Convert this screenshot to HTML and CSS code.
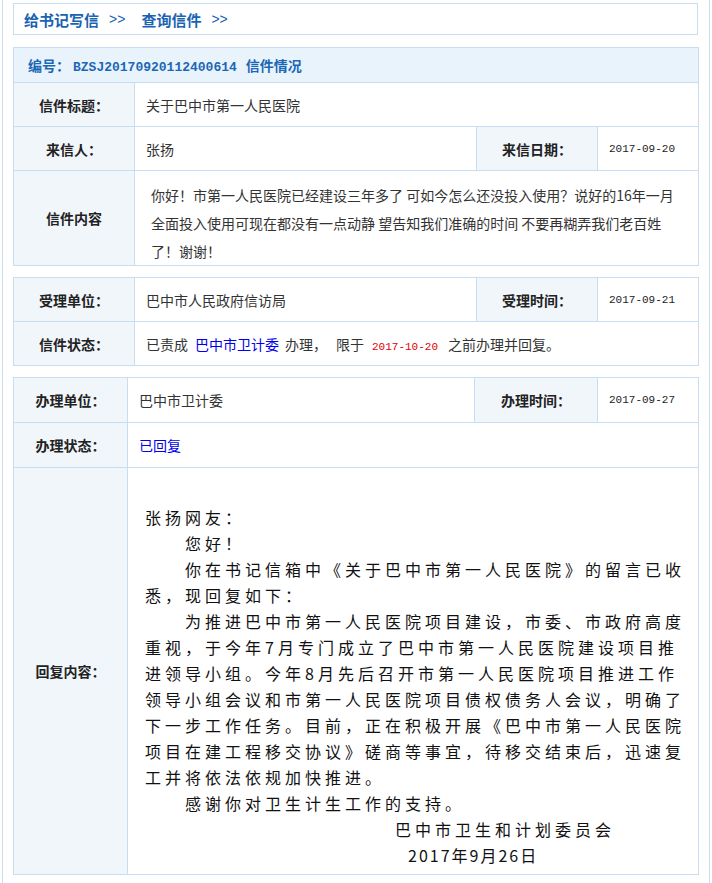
FILE: index.html
```html
<!DOCTYPE html>
<html lang="zh-CN">
<head>
  <meta charset="UTF-8" />
  <title>信件详情</title>
  <link rel="stylesheet" href="styles.css">
</head>
<body>
  <div class="page">
    <div class="nav">
      <a href="#">给书记写信</a><span class="arrow">&gt;&gt;</span>
      <a href="#">查询信件</a><span class="arrow">&gt;&gt;</span>
    </div>

    <table class="info">
      <colgroup>
        <col class="c-label"><col class="c-value"><col class="c-label2"><col class="c-date">
      </colgroup>
      <tr class="head">
        <td colspan="4">编号：<span class="code">BZSJ20170920112400614</span>信件情况</td>
      </tr>
      <tr>
        <th>信件标题：</th>
        <td colspan="3">关于巴中市第一人民医院</td>
      </tr>
      <tr>
        <th>来信人：</th>
        <td>张扬</td>
        <th>来信日期：</th>
        <td class="date">2017-09-20</td>
      </tr>
      <tr>
        <th>信件内容</th>
        <td colspan="3" class="letter">你好！市第一人民医院已经建设三年多了 可如今怎么还没投入使用？说好的16年一月全面投入使用可现在都没有一点动静 望告知我们准确的时间 不要再糊弄我们老百姓了！谢谢！</td>
      </tr>
    </table>

    <table class="info">
      <colgroup>
        <col class="c-label"><col class="c-value"><col class="c-label2"><col class="c-date">
      </colgroup>
      <tr>
        <th>受理单位：</th>
        <td>巴中市人民政府信访局</td>
        <th>受理时间：</th>
        <td class="date">2017-09-21</td>
      </tr>
      <tr>
        <th>信件状态：</th>
        <td colspan="3">已责成<span class="dept">巴中市卫计委</span>办理，<span class="gap"></span>限于<span class="deadline">2017-10-20</span>之前办理并回复。</td>
      </tr>
    </table>

    <table class="info reply-table">
      <colgroup>
        <col class="c-label"><col class="c-value"><col class="c-label2"><col class="c-date">
      </colgroup>
      <tr>
        <th>办理单位：</th>
        <td>巴中市卫计委</td>
        <th>办理时间：</th>
        <td class="date">2017-09-27</td>
      </tr>
      <tr>
        <th>办理状态：</th>
        <td colspan="3"><span class="done">已回复</span></td>
      </tr>
      <tr>
        <th>回复内容：</th>
        <td colspan="3" class="reply">
          <p>张扬网友：</p>
          <p class="indent">您好！</p>
          <p class="indent">你在书记信箱中《关于巴中市第一人民医院》的留言已收悉，现回复如下：</p>
          <p class="indent">为推进巴中市第一人民医院项目建设，市委、市政府高度重视，于今年7月专门成立了巴中市第一人民医院建设项目推进领导小组。今年8月先后召开市第一人民医院项目推进工作领导小组会议和市第一人民医院项目债权债务人会议，明确了下一步工作任务。目前，正在积极开展《巴中市第一人民医院项目在建工程移交协议》磋商等事宜，待移交结束后，迅速复工并将依法依规加快推进。</p>
          <p class="indent">感谢你对卫生计生工作的支持。</p>
          <p class="sign">巴中市卫生和计划委员会</p>
          <p class="sign-date">2017年9月26日</p>
        </td>
      </tr>
    </table>
  </div>
</body>
</html>
```

FILE: styles.css
```css
* {
  box-sizing: border-box;
}

body {
  margin: 0;
  background: #fff;
  font-family: "Noto Sans CJK SC", "Noto Sans", sans-serif;
  font-size: 14px;
  color: #333;
}

.page {
  width: 708px;
  margin-left: 2px;
  min-height: 883px;
  padding: 3px 11px 0 10px;
  border-left: 1px solid #c9def2;
  border-right: 1px solid #c9def2;
}

.nav {
  height: 32px;
  border: 1px solid #c6ddf2;
  padding-left: 10px;
  display: flex;
  align-items: center;
  margin-bottom: 12px;
}

.nav a {
  color: #1a63b3;
  font-size: 15px;
  font-weight: bold;
  text-decoration: none;
}

.arrow {
  color: #1a63b3;
  font-family: "Liberation Sans", sans-serif;
  font-size: 14px;
  margin: 0 16px 0 10px;
}

.info {
  width: 685px;
  table-layout: fixed;
  border-collapse: collapse;
  margin-bottom: 11px;
}

.c-label { width: 121px; }
.c-value { width: 342px; }
.c-label2 { width: 121px; }
.c-date { width: 101px; }

.reply-table .c-label { width: 114px; }
.reply-table .c-value { width: 347px; }
.reply-table .c-label2 { width: 123px; }

.info th,
.info td {
  border: 1px solid #c6ddf2;
  height: 44px;
  padding: 0 11px;
  vertical-align: middle;
  text-align: left;
  font-weight: normal;
}

.reply-table th,
.reply-table td {
  height: 45px;
}

.info th {
  background: #f1f6fb;
  text-align: center;
  font-weight: bold;
  color: #222;
  padding: 0;
}

.info .head td {
  height: 35px;
  background: #e9f3fc;
  color: #1b67b6;
  font-weight: bold;
  padding-left: 14px;
}

.code {
  font-family: "Liberation Mono", monospace;
  font-size: 13px;
  margin: 0 9px 0 3px;
}

.info td.date {
  font-family: "Liberation Mono", monospace;
  font-size: 11px;
  color: #222;
  padding-left: 11px;
}

.info td.letter {
  height: 93px;
  vertical-align: top;
  padding: 10px 16px 0 16px;
  line-height: 28px;
}

.dept {
  color: #0000ee;
  margin: 0 6px 0 7px;
}

.gap {
  display: inline-block;
  width: 9px;
}

.deadline {
  color: #e00000;
  font-family: "Liberation Mono", monospace;
  font-size: 11px;
  margin: 0 10px 0 8px;
}

.done {
  color: #0000ee;
}

.info td.reply {
  height: 406px;
  vertical-align: top;
  padding: 36px 8px 6px 17px;
  font-size: 16px;
  letter-spacing: 4px;
  line-height: 26px;
  color: #111;
}

.reply p {
  margin: 0;
}

.reply .indent {
  text-indent: 40px;
}

.reply .sign {
  padding-left: 250px;
}

.reply .sign-date {
  padding-left: 263px;
  letter-spacing: 2px;
}
```
